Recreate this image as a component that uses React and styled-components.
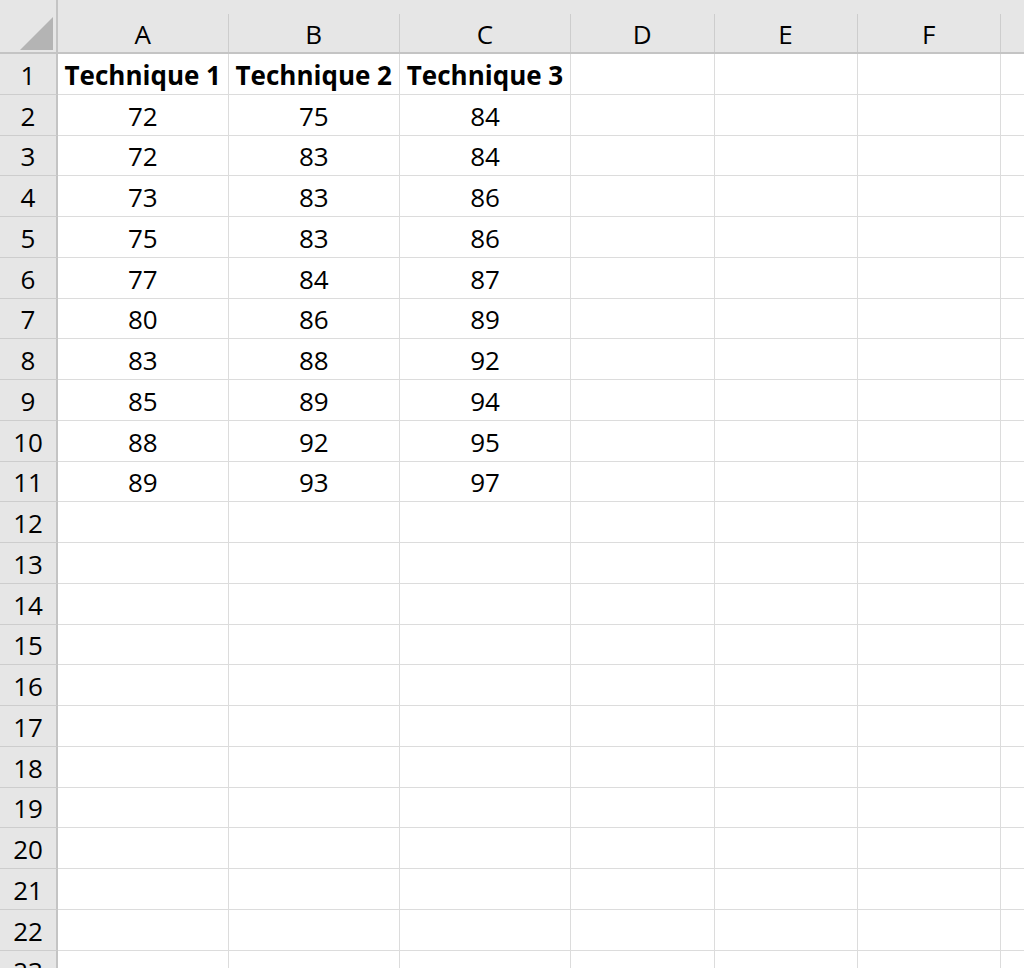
import styled, { createGlobalStyle } from "styled-components";

const GlobalStyle = createGlobalStyle`
  html, body {
    margin: 0;
    padding: 0;
    background: #ffffff;
    overflow: hidden;
  }
  body {
    font-family: "Open Sans", "Liberation Sans", sans-serif;
  }
`;

const columns = [
  { name: "A", width: 170.5 },
  { name: "B", width: 171.5 },
  { name: "C", width: 171 },
  { name: "D", width: 143.5 },
  { name: "E", width: 143 },
  { name: "F", width: 143.5 },
  { name: "", width: 143 },
];

const data = [
  ["Technique 1", "Technique 2", "Technique 3"],
  ["72", "75", "84"],
  ["72", "83", "84"],
  ["73", "83", "86"],
  ["75", "83", "86"],
  ["77", "84", "87"],
  ["80", "86", "89"],
  ["83", "88", "92"],
  ["85", "89", "94"],
  ["88", "92", "95"],
  ["89", "93", "97"],
];

const ROWS = 23;

const Sheet = styled.div`
  width: 1024px;
  height: 968px;
  overflow: hidden;
  display: flex;
  flex-direction: column;
  color: #000;
`;

const HeaderRow = styled.div`
  display: flex;
  flex-shrink: 0;
  height: 52px;
  background: #e6e6e6;
  border-bottom: 2px solid #c4c4c4;
`;

const Corner = styled.div`
  flex: 0 0 58px;
  display: flex;
  align-items: flex-end;
  justify-content: flex-end;
  padding: 0 3px 2px 0;
  box-sizing: border-box;
  border-right: 2px solid #c4c4c4;
`;

const ColHeader = styled.div`
  flex: 0 0 ${(p) => p.$w - 1}px;
  margin-top: 14px;
  border-right: 1px solid #cdcdcd;
  display: flex;
  align-items: center;
  justify-content: center;
  font-size: 26px;
  line-height: 1;
  padding-top: 2px;
`;

const Body = styled.div`
  display: flex;
  flex-direction: column;
`;

const Row = styled.div`
  display: flex;
  flex-shrink: 0;
  height: 40.75px;
`;

const RowHeader = styled.div`
  flex: 0 0 58px;
  background: #e6e6e6;
  border-right: 2px solid #c4c4c4;
  border-bottom: 1px solid #cdcdcd;
  display: flex;
  align-items: center;
  justify-content: center;
  font-size: 26px;
  line-height: 1;
  padding-top: 2px;
  box-sizing: border-box;
`;

const Cell = styled.div`
  flex: 0 0 ${(p) => p.$w - 1}px;
  border-right: 1px solid #dcdcdc;
  border-bottom: 1px solid #dcdcdc;
  display: flex;
  align-items: center;
  justify-content: center;
  font-size: 26px;
  font-weight: ${(p) => (p.$bold ? 700 : 400)};
  line-height: 1;
  padding-top: 2px;
  white-space: nowrap;
  box-sizing: border-box;
`;

const Triangle = () => (
  <svg width="33" height="33" viewBox="0 0 33 33">
    <polygon points="0,33 33,0 33,33" fill="#b4b4b4" />
  </svg>
);

const App = () => {
  return (
    <>
      <GlobalStyle />
      <Sheet>
        <HeaderRow>
          <Corner>
            <Triangle />
          </Corner>
          {columns.map((c, i) => (
            <ColHeader key={i} $w={c.width}>
              {c.name}
            </ColHeader>
          ))}
        </HeaderRow>
        <Body>
          {Array.from({ length: ROWS }, (_, r) => (
            <Row key={r}>
              <RowHeader>{r + 1}</RowHeader>
              {columns.map((c, ci) => (
                <Cell key={ci} $w={c.width + 1} $bold={r === 0}>
                  {data[r] && data[r][ci] ? data[r][ci] : ""}
                </Cell>
              ))}
            </Row>
          ))}
        </Body>
      </Sheet>
    </>
  );
};

export default App;
